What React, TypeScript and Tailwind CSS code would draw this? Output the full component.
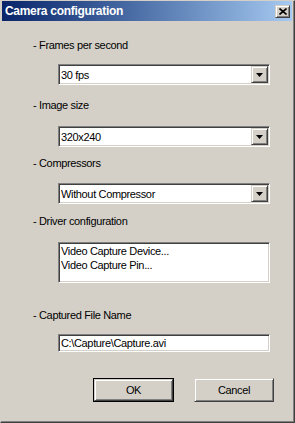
import React from "react";

const font = { fontFamily: '"Liberation Sans", Arial, sans-serif' };

// sunken 2px field border (classic windows)
const sunken =
  "border border-t-[#808080] border-l-[#808080] border-b-white border-r-white shadow-[inset_1px_1px_0_#404040,inset_-1px_-1px_0_#d4d0c8] bg-white";

const raised =
  "bg-[#d4d0c8] border border-t-[#d4d0c8] border-l-[#d4d0c8] border-b-[#404040] border-r-[#404040] shadow-[inset_1px_1px_0_#ffffff,inset_-1px_-1px_0_#808080]";

const txt = "text-[11px] leading-[14px] tracking-[-0.35px] text-black";

const Label: React.FC<{ children: React.ReactNode; className?: string }> = ({ children, className }) => (
  <div className={`ml-[32px] h-[14px] ${txt} ${className ?? ""}`}>{children}</div>
);

const Combo: React.FC<{ value: string; className?: string }> = ({ value, className }) => (
  <div className={`ml-[57px] w-[212px] h-[21px] flex items-center ${sunken} ${className ?? ""}`}>
    <span className={`flex-1 pl-[2px] ${txt}`}>{value}</span>
    <div className={`w-[17px] h-[17px] mr-[1px] flex items-center justify-center ${raised}`}>
      <svg width="7" height="4" viewBox="0 0 7 4">
        <polygon points="0,0 7,0 3.5,4" fill="#000" />
      </svg>
    </div>
  </div>
);

const Button: React.FC<{ children: React.ReactNode; primary?: boolean }> = ({ children, primary }) =>
  primary ? (
    <div className="border border-black w-[81px] h-[24px] flex">
      <div className={`flex-1 flex items-center justify-center ${txt} ${raised}`}>{children}</div>
    </div>
  ) : (
    <div className={`w-[80px] h-[24px] flex items-center justify-center ${txt} ${raised}`}>{children}</div>
  );

export default function App() {
  return (
    <div
      style={font}
      className="w-[295px] h-[423px] bg-[#d4d0c8] border-t border-l border-t-[#d4d0c8] border-l-[#d4d0c8] border-r border-b border-r-[#404040] border-b-[#404040] shadow-[inset_-1px_-1px_0_#808080] flex flex-col overflow-hidden"
    >
      {/* title bar */}
      <div className="mx-[1px] mr-[2px] h-[20px] flex items-center bg-gradient-to-r from-[#0a246a] to-[#a6caf0]">
        <span className="ml-[3px] flex-1 text-white font-bold text-[12px] leading-[14px] tracking-[-0.3px]">
          Camera configuration
        </span>
        <div className={`w-[15px] h-[13px] mr-[2px] flex items-center justify-center ${raised}`}>
          <svg width="8" height="7" viewBox="0 0 8 7">
            <path d="M0.5 0.5 L7.5 6.5 M7.5 0.5 L0.5 6.5" stroke="#000" strokeWidth="1.6" />
          </svg>
        </div>
      </div>

      <Label className="mt-[17px]">- Frames per second</Label>
      <Combo value="30 fps" className="mt-[12px]" />

      <Label className="mt-[13px]">- Image size</Label>
      <Combo value="320x240" className="mt-[14px]" />

      <Label className="mt-[9px]">- Compressors</Label>
      <Combo value="Without Compressor" className="mt-[13px]" />

      <Label className="mt-[10px]">- Driver configuration</Label>
      <div className={`ml-[57px] mt-[14px] w-[212px] h-[41px] px-[2px] pt-[1px] ${sunken}`}>
        <div className={txt}>Video Capture Device...</div>
        <div className={txt}>Video Capture Pin...</div>
      </div>

      <Label className="mt-[25px]">- Captured File Name</Label>
      <div className={`ml-[57px] mt-[12px] w-[212px] h-[18px] flex items-center pl-[2px] ${sunken}`}>
        <span className={txt}>C:\Capture\Capture.avi</span>
      </div>

      <div className="mt-[26px] ml-[92px] flex gap-[20px]">
        <Button primary>OK</Button>
        <Button>Cancel</Button>
      </div>
    </div>
  );
}
